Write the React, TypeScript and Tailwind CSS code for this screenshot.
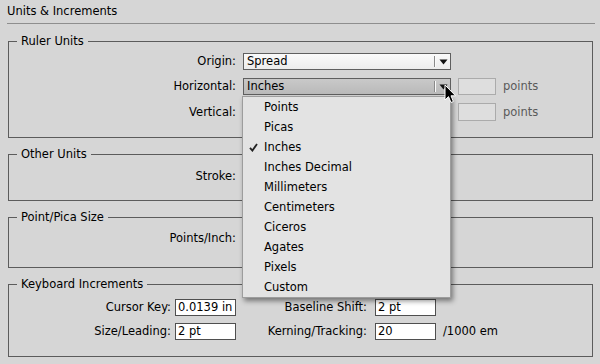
import React from "react";

const font = { fontFamily: '"DejaVu Sans", "Liberation Sans", sans-serif' };

function Arrow() {
  return (
    <svg width="9" height="6" viewBox="0 0 9 6" className="block">
      <path d="M0.5 0.5 L8.5 0.5 L4.5 5.5 Z" fill="#111" />
    </svg>
  );
}

function Select({ value, active }: { value: string; active?: boolean }) {
  return (
    <div
      className={`flex h-[17px] w-[208px] items-center border border-[#5f5f5f] ${
        active ? "bg-gradient-to-b from-[#c9c9c9] to-[#b9b9b9]" : "bg-gradient-to-b from-[#fafafa] to-[#ececec]"
      }`}
    >
      <span className="flex-1 pl-[3px] leading-[15px] text-black">{value}</span>
      <div className="flex h-full items-center">
        <div className="h-[11px] w-[2px] border-l border-r border-l-[#8a8a8a] border-r-[#fafafa]" />
        <div className="flex w-[14px] justify-center">
          <Arrow />
        </div>
      </div>
    </div>
  );
}

function Group({ title, children, className }: { title: string; children: React.ReactNode; className?: string }) {
  return (
    <fieldset className={`border border-[#5c5c5c] ${className ?? ""}`}>
      <legend className="ml-[8px] px-[4px] leading-[15px] text-black">{title}</legend>
      {children}
    </fieldset>
  );
}

function Label({ children, w }: { children: React.ReactNode; w: string }) {
  return <div className={`${w} shrink-0 text-right leading-[17px] text-black`}>{children}</div>;
}

function WhiteInput({ value }: { value: string }) {
  return (
    <div className="h-[17px] w-[61px] border border-[#4f4f4f] bg-white pl-[2px] leading-[15px] text-black">
      {value}
    </div>
  );
}

const items = [
  "Points",
  "Picas",
  "Inches",
  "Inches Decimal",
  "Millimeters",
  "Centimeters",
  "Ciceros",
  "Agates",
  "Pixels",
  "Custom",
];

export default function App() {
  return (
    <div
      className="relative h-[364px] w-[600px] overflow-hidden bg-[#d6d6d6] pl-[8px] pr-[7px] text-[11.5px]"
      style={font}
    >
      <div className="-ml-[1px] -mr-[2px] border-b border-[#8e8e8e] pb-[4px] pl-[0px] pt-[4px] leading-[15px] text-black">
        Units &amp; Increments
      </div>

      <Group title="Ruler Units" className="mt-[10px] pb-[16px] pt-[4px]">
        <div className="flex flex-col gap-[8px]">
          <div className="flex items-center">
            <Label w="w-[227px]">Origin:</Label>
            <div className="ml-[7px]">
              <Select value="Spread" />
            </div>
          </div>
          <div className="flex items-center">
            <Label w="w-[227px]">Horizontal:</Label>
            <div className="ml-[7px]">
              <Select value="Inches" active />
            </div>
            <div className="ml-[7px] h-[17px] w-[38px] border border-[#ababab] bg-[#dedede]" />
            <span className="ml-[7px] leading-[17px] text-[#5a5a5a]">points</span>
          </div>
          <div className="flex items-center">
            <Label w="w-[227px]">Vertical:</Label>
            <div className="ml-[7px] w-[208px]" />
            <div className="ml-[7px] h-[18px] w-[38px] border border-[#ababab] bg-[#dedede]" />
            <span className="ml-[7px] leading-[17px] text-[#5a5a5a]">points</span>
          </div>
        </div>
      </Group>

      <Group title="Other Units" className="mt-[9px] pb-[15px] pt-[6px]">
        <div className="flex items-center">
          <Label w="w-[227px]">Stroke:</Label>
        </div>
      </Group>

      <Group title="Point/Pica Size" className="mt-[9px] pb-[20px] pt-[5px]">
        <div className="flex items-center">
          <Label w="w-[227px]">Points/Inch:</Label>
        </div>
      </Group>

      <Group title="Keyboard Increments" className="mt-[9px] pb-[16px] pt-[7px]">
        <div className="flex flex-col gap-[7px]">
          <div className="flex items-center">
            <Label w="w-[162px]">Cursor Key:</Label>
            <div className="ml-[4px]">
              <WhiteInput value="0.0139 in" />
            </div>
            <Label w="w-[131px]">Baseline Shift:</Label>
            <div className="ml-[8px]">
              <WhiteInput value="2 pt" />
            </div>
          </div>
          <div className="flex items-center">
            <Label w="w-[162px]">Size/Leading:</Label>
            <div className="ml-[4px]">
              <WhiteInput value="2 pt" />
            </div>
            <Label w="w-[131px]">Kerning/Tracking:</Label>
            <div className="ml-[8px]">
              <WhiteInput value="20" />
            </div>
            <span className="ml-[7px] leading-[17px] text-black">/1000 em</span>
          </div>
        </div>
      </Group>

      {/* Dropdown menu overlay */}
      <div className="absolute left-[242px] top-[96px] w-[209px] border border-[#9d9d9d] bg-[#e3e3e3] shadow-[2px_3px_5px_rgba(0,0,0,0.45)]">
        {items.map((it) => (
          <div key={it} className="relative flex h-[20px] items-center pl-[21px] leading-[20px] text-black">
            {it === "Inches" && (
              <svg className="absolute left-[6px] top-[6px]" width="9" height="9" viewBox="0 0 9 9">
                <path d="M1 4.8 L3.4 7.6 L8 1" fill="none" stroke="#222" strokeWidth="1.8" />
              </svg>
            )}
            {it}
          </div>
        ))}
      </div>

      {/* Mouse cursor overlay */}
      <svg className="absolute left-[444px] top-[84px]" width="13" height="21" viewBox="0 0 13 21">
        <path
          d="M1 1 L1 16 L4.5 12.6 L7 18.5 L9.4 17.5 L7 11.8 L11.6 11.8 Z"
          fill="#000"
          stroke="#fff"
          strokeWidth="1"
          strokeLinejoin="round"
        />
      </svg>
    </div>
  );
}
